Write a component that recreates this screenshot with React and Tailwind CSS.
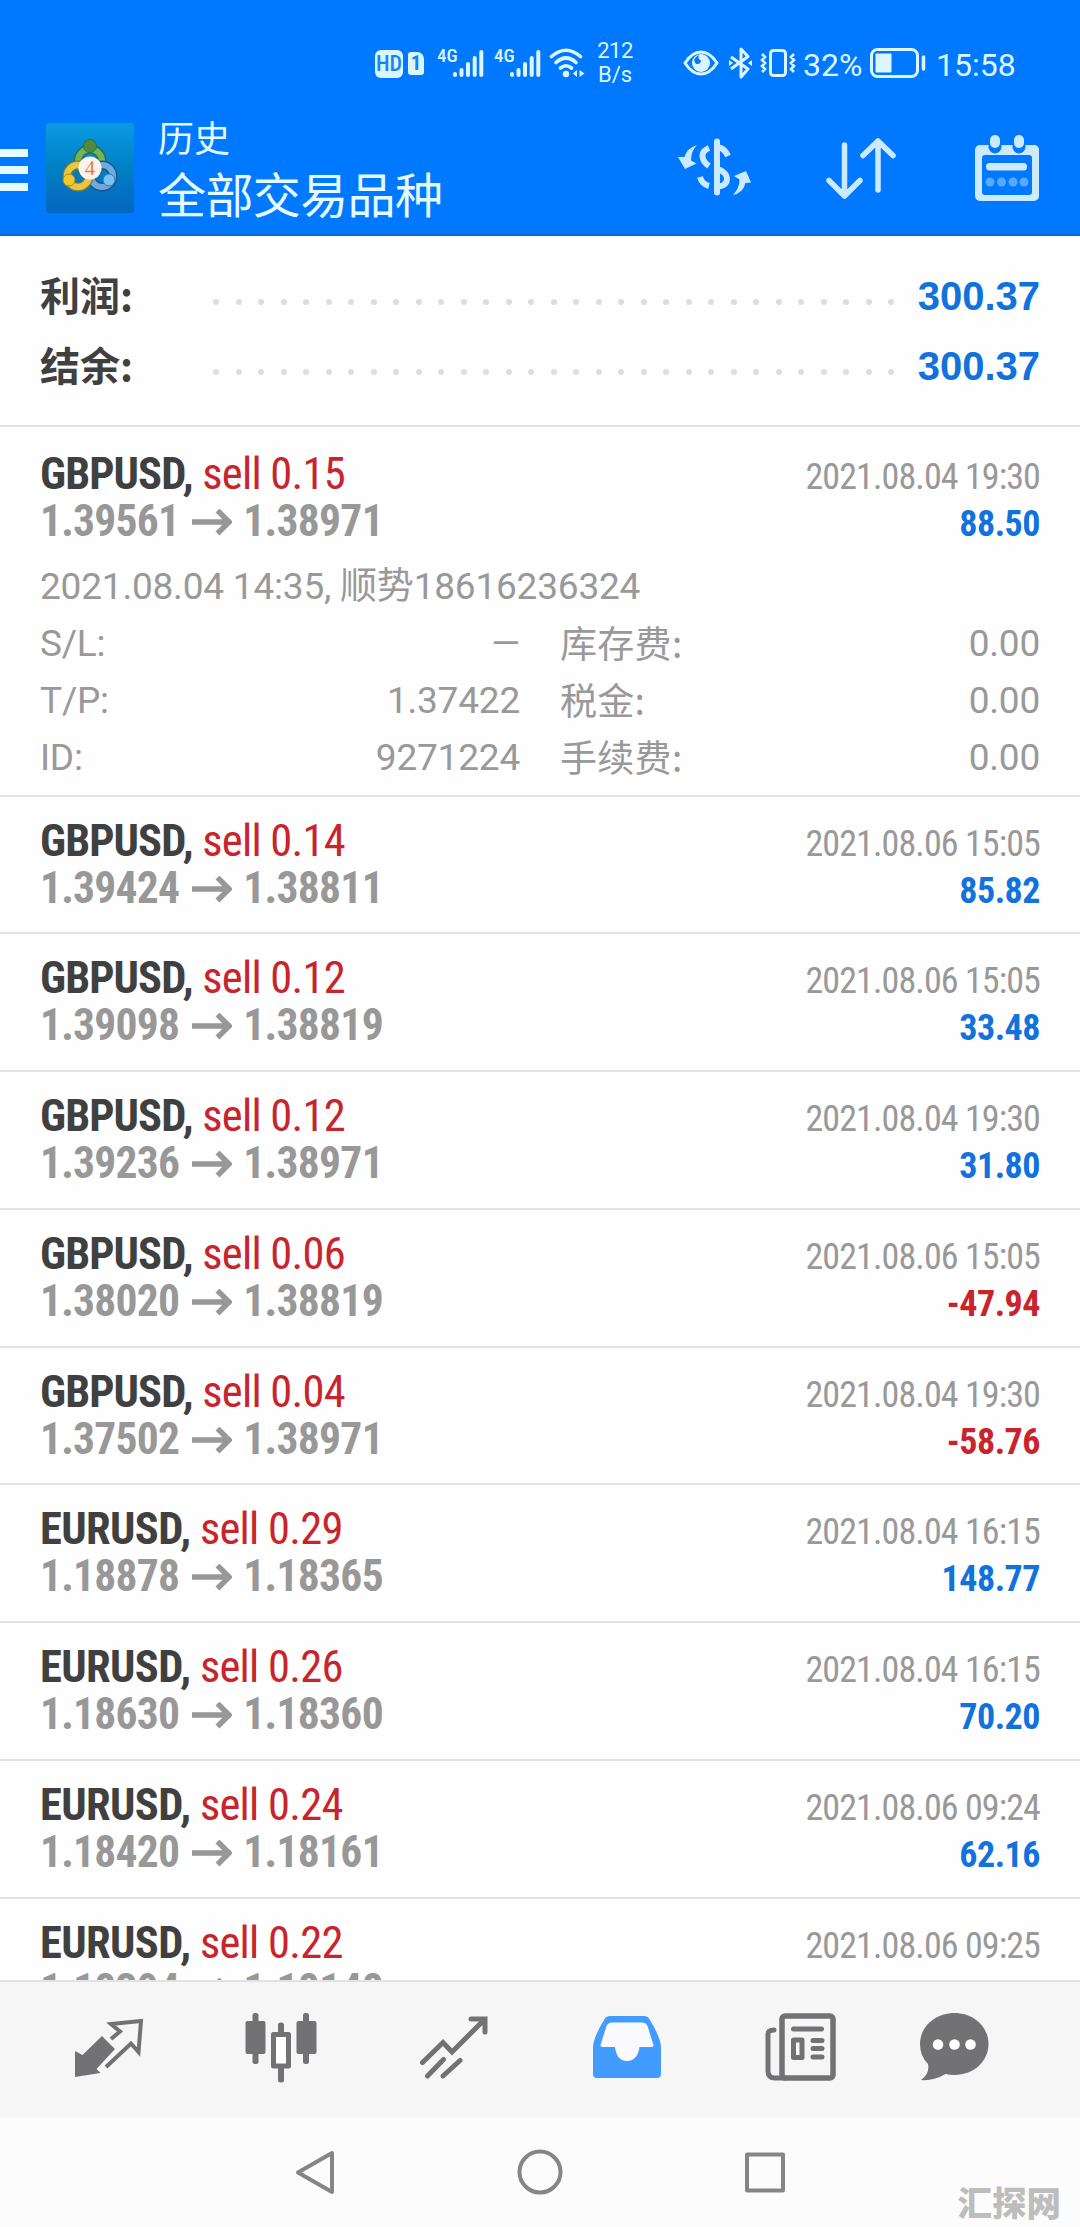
import React from 'react';

const orders = [
  { symbol: 'GBPUSD', lot: '0.14', open: '1.39424', close: '1.38811', time: '2021.08.06 15:05', profit: '85.82' },
  { symbol: 'GBPUSD', lot: '0.12', open: '1.39098', close: '1.38819', time: '2021.08.06 15:05', profit: '33.48' },
  { symbol: 'GBPUSD', lot: '0.12', open: '1.39236', close: '1.38971', time: '2021.08.04 19:30', profit: '31.80' },
  { symbol: 'GBPUSD', lot: '0.06', open: '1.38020', close: '1.38819', time: '2021.08.06 15:05', profit: '-47.94' },
  { symbol: 'GBPUSD', lot: '0.04', open: '1.37502', close: '1.38971', time: '2021.08.04 19:30', profit: '-58.76' },
  { symbol: 'EURUSD', lot: '0.29', open: '1.18878', close: '1.18365', time: '2021.08.04 16:15', profit: '148.77' },
  { symbol: 'EURUSD', lot: '0.26', open: '1.18630', close: '1.18360', time: '2021.08.04 16:15', profit: '70.20' },
  { symbol: 'EURUSD', lot: '0.24', open: '1.18420', close: '1.18161', time: '2021.08.06 09:24', profit: '62.16' },
  { symbol: 'EURUSD', lot: '0.22', open: '1.18394', close: '1.18148', time: '2021.08.06 09:25', profit: '' },
];

const details = [
  ['S/L:', '—', '库存费:', '0.00'],
  ['T/P:', '1.37422', '税金:', '0.00'],
  ['ID:', '9271224', '手续费:', '0.00'],
];

function Signal() {
  return (
    <div className="flex h-[29px]">
      <span className="w-[15px] text-[19px] leading-[13px] font-medium font-stretch-condensed">4G</span>
      <svg width="32" height="29" viewBox="0 0 32 29" stroke="currentColor" strokeWidth="4" strokeLinecap="round">
        <path d="M3 26v-1M9.5 26v-5M16 26V15M22.7 26V9M29.3 26V3" />
      </svg>
    </div>
  );
}

function StatusBar() {
  return (
    <div className="flex h-[106px] items-start pt-[43px] pl-[375px] text-[#dcf6ff]">
      <div className="mt-[7px] flex h-[28px] w-[28px] items-center justify-center rounded-[6px] bg-[#dcf6ff] text-[22px] leading-none font-medium font-stretch-condensed text-[#1684f2]">HD</div>
      <div className="mt-[9px] ml-[5px] flex h-[23px] w-[16px] items-center justify-center rounded-[3px] rounded-tr-[7px] bg-[#dcf6ff] text-[21px] leading-none font-bold font-stretch-condensed text-[#1684f2]">1</div>
      <div className="mt-[6px] ml-[13px]"><Signal /></div>
      <div className="mt-[6px] ml-[10px]"><Signal /></div>
      <svg className="mt-[4px] ml-[8px]" width="36" height="31" viewBox="0 0 36 31" fill="none" stroke="currentColor" strokeWidth="3.6" strokeLinecap="round">
        <path d="M2.5 9.5Q17 -3 31.5 9.5M7 15.5Q17 6.5 27 15.5M11.5 21Q17 16.5 22.5 21" />
        <circle cx="17" cy="27" r="3.2" fill="currentColor" stroke="none" />
        <path d="M28 23v7l-4-3.5zM30.5 23v7l5-3.5z" fill="currentColor" stroke="none" />
      </svg>
      <div className="ml-[10px] w-[40px] text-center text-[22px] leading-[24px] -mt-[4px]">
        <div className="tracking-[-0.5px]">212</div>
        <div>B/s</div>
      </div>
      <svg className="mt-[7px] ml-[48px]" width="36" height="26" viewBox="0 0 36 26" fill="none" stroke="currentColor" strokeWidth="3">
        <path d="M2 13Q9 2 18 2T34 13Q27 24 18 24T2 13z" strokeLinejoin="round" />
        <circle cx="18" cy="13" r="9" fill="currentColor" stroke="none" />
        <path d="M11 10a8.5 8.5 0 0 1 5-5c-1 3-.5 4 2 5.5 0 3-2.5 4.5-5.5 3z" fill="#0078ff" stroke="none" />
      </svg>
      <svg className="mt-[4px] ml-[10px]" width="23" height="32" viewBox="0 0 23 32" fill="none" stroke="currentColor" strokeWidth="3" strokeLinejoin="round">
        <path d="M2 10 19 22l-7 8V2l7 7.5L2 22" />
        <path d="M0 13v6l4-3zM23 13v6l-4-3z" fill="currentColor" stroke="none" />
      </svg>
      <svg className="mt-[5px] ml-[8px]" width="36" height="30" viewBox="0 0 36 30" fill="none" stroke="currentColor" strokeWidth="3">
        <rect x="10.5" y="2.5" width="15" height="25" rx="3" />
        <path d="M2 6l3 3-3 3 3 3-3 3 3 3-3 3M34 6l-3 3 3 3-3 3 3 3-3 3 3 3" strokeWidth="2.6" />
      </svg>
      <span className="ml-[7px] mt-[2px] w-[64px] text-[32px] leading-[40px]">32%</span>
      <svg className="mt-[5px] ml-[3px]" width="56" height="31" viewBox="0 0 56 31" fill="none" stroke="currentColor">
        <rect x="1.5" y="1.5" width="46" height="27" rx="6" strokeWidth="3" />
        <rect x="5.5" y="5.5" width="16" height="19" rx="1" fill="currentColor" stroke="none" />
        <path d="M53.5 9v12" strokeWidth="3.5" strokeLinecap="round" />
      </svg>
      <span className="ml-[10px] mt-[2px] text-[32px] leading-[40px]">15:58</span>
    </div>
  );
}

function Logo() {
  return (
    <svg width="88" height="90" viewBox="0 0 88 90">
      <defs>
        <linearGradient id="bg" x1="0" y1="0" x2="0" y2="1">
          <stop offset="0" stopColor="#0a9ae2" />
          <stop offset="0.5" stopColor="#0080c4" />
          <stop offset="1" stopColor="#0566c0" />
        </linearGradient>
      </defs>
      <rect width="88" height="90" rx="3" fill="url(#bg)" />
      <g fill="none">
        <circle cx="44" cy="38" r="12" stroke="#2f6f4a" strokeWidth="9" />
        <circle cx="44" cy="38" r="12" stroke="#74b35a" strokeWidth="6" />
        <circle cx="56" cy="53" r="11" stroke="#1c558f" strokeWidth="9" />
        <circle cx="56" cy="53" r="11" stroke="#6cabe0" strokeWidth="6" />
        <circle cx="32" cy="53" r="11" stroke="#7a7a38" strokeWidth="9" />
        <circle cx="32" cy="53" r="11" stroke="#e6c644" strokeWidth="6.5" />
      </g>
      <circle cx="44" cy="23" r="6.5" fill="#4f8a3d" stroke="#2f6f3a" />
      <circle cx="23" cy="57" r="6" fill="#f0c92a" stroke="#a88a20" />
      <circle cx="63" cy="57" r="6" fill="#7cc0f0" stroke="#2f75b5" />
      <circle cx="44" cy="45" r="11.5" fill="#fbf4ee" />
      <text x="44" y="52" textAnchor="middle" fontSize="21" fill="#e2803e" fontFamily="Liberation Serif, serif">4</text>
    </svg>
  );
}

function Header() {
  return (
    <header className="h-[236px] shrink-0 border-b-2 border-[#0a68cf] bg-[#0078ff]">
      <StatusBar />
      <div className="flex items-start">
        <div className="mt-[43px] flex w-[28px] flex-col gap-[9px]">
          <div className="h-[8px] bg-[#e6fbff]" />
          <div className="h-[8px] bg-[#e6fbff]" />
          <div className="h-[8px] bg-[#e6fbff]" />
        </div>
        <div className="mt-[17px] ml-[18px]"><Logo /></div>
        <div className="ml-[24px] w-[300px] text-[#e6fbff]">
          <div className="mt-[10px] text-[36px] leading-[48px]">历史</div>
          <div className="text-[48px] leading-[65px] tracking-[-0.6px]">全部交易品种</div>
        </div>
        <svg className="mt-[31px] ml-[218px]" width="76" height="60" viewBox="0 0 76 60" fill="none" stroke="#cbeafd">
          <path d="M41 4.5v51" strokeWidth="6" strokeLinecap="round" />
          <path d="M33 11Q26.5 13.5 26.5 19T33 29M43 10.5Q49 12 52 19M24 40Q26 47 33 49M43 32.5Q51 36 51 42T43 49.5" strokeWidth="6" />
          <path d="M21 8Q11 11 8.5 20L2 20l7 12 11.5-5.5L15 23.5Q15 14 21 8zM57 58Q67 56 69.5 46L75 45.5 70 34 58 39l5.5 3.5Q63.5 51 57 58z" fill="#cbeafd" stroke="none" />
        </svg>
        <svg className="mt-[32px] ml-[74px]" width="70" height="62" viewBox="0 0 70 62" fill="none" stroke="#cbeafd" strokeWidth="5.5" strokeLinecap="round" strokeLinejoin="round">
          <path d="M18.5 7v51M3 42.5 18.5 58 34 42.5M52 52V3M37 17.5 52 3l15 14.5" />
        </svg>
        <svg className="mt-[28px] ml-[79px]" width="65" height="68" viewBox="0 0 65 68">
          <path d="M5 11h8.5v2a6.5 6.5 0 0 0 13 0v-2h11v2a6.5 6.5 0 0 0 13 0v-2H60a5 5 0 0 1 4 4v47a5 5 0 0 1-5 5H5a5 5 0 0 1-5-5V16a5 5 0 0 1 5-5zM10 21a3 3 0 0 0-3 3v34a3 3 0 0 0 3 3h44a3 3 0 0 0 3-3V24a3 3 0 0 0-3-3z" fill="#cbeafd" fillRule="evenodd" />
          <rect x="15" y="1" width="10" height="13" rx="5" fill="#cbeafd" />
          <rect x="39" y="1" width="10" height="13" rx="5" fill="#cbeafd" />
          <rect x="11" y="29" width="41" height="7.5" rx="3.5" fill="#cbeafd" />
          <g fill="#58aaff">
            <circle cx="15" cy="48" r="4.5" />
            <circle cx="26.5" cy="48" r="4.5" />
            <circle cx="38" cy="48" r="4.5" />
            <circle cx="49" cy="48" r="4.5" />
          </g>
        </svg>
      </div>
    </header>
  );
}

function SummaryRow({ label, value }) {
  return (
    <div className="flex h-[70px] items-start">
      <span className="w-[173px] font-[Noto_Sans_CJK_SC,sans-serif] text-[40px] leading-[66px] font-bold text-[#404040]">{label}</span>
      <div className="mt-[38px] flex w-[681px] justify-between">
        {Array.from({ length: 31 }, (_, i) => (
          <span key={i} className="h-[6px] w-[6px] rounded-full bg-[#dedede]" />
        ))}
      </div>
      <span className="ml-auto font-[Liberation_Sans,sans-serif] text-[40px] leading-[70px] font-bold text-[#1272dc]">{value}</span>
    </div>
  );
}

function OrderHead({ order }) {
  const loss = order.profit.startsWith('-');
  return (
    <div className="font-stretch-condensed">
      <div className="flex h-[48px] items-baseline justify-between leading-[48px]">
        <div className="text-[44.5px] tracking-[-0.75px]">
          <span className={order.symbol === 'EURUSD' ? 'font-bold tracking-[-0.6px] text-[#404040]' : 'font-bold tracking-[-0.9px] text-[#404040]'}>
            {order.symbol},
          </span>
          <span className="text-[#c8242c]"> sell {order.lot}</span>
        </div>
        <div className="text-[36px] tracking-[-0.9px] text-[#999]">{order.time}</div>
      </div>
      <div className="flex h-[48px] items-baseline leading-[48px]">
        <span className="text-[43.5px] font-bold tracking-[-0.75px] text-[#989898]">{order.open}</span>
        <svg className="mr-[11px] ml-[13px]" width="40" height="27" viewBox="0 0 40 27" fill="none" stroke="#989898" strokeWidth="5.5">
          <path d="M0 13h37M25.5 1.5 37 13 25.5 24.5" />
        </svg>
        <span className="text-[43.5px] font-bold tracking-[-0.7px] text-[#989898]">{order.close}</span>
        <span className={loss ? 'ml-auto text-[36px] font-bold tracking-[-0.5px] text-[#c8242c]' : 'ml-auto text-[36px] font-bold tracking-[-0.5px] text-[#1272dc]'}>
          {order.profit}
        </span>
      </div>
    </div>
  );
}

function TabBar() {
  return (
    <nav className="flex h-[138px] shrink-0 items-start border-t-2 border-[#e2e2e2] bg-[#f6f6f7] pt-[31px] pl-[75px] text-[#727274]">
      <svg className="mt-[5px]" width="69" height="62" viewBox="0 0 69 62" fill="none" stroke="currentColor" strokeWidth="4">
        <path d="M0 33v26l25.5-4-4-4L40 31 27 18 7.5 37z" fill="currentColor" stroke="none" />
        <path d="M36 21l9-7.5L36 6l30-3-2.5 31L56 25.5 31 49" />
      </svg>
      <svg className="ml-[101px]" width="72" height="70" viewBox="0 0 72 70">
        <g fill="currentColor">
          <rect x="7.5" y="0" width="6" height="51" rx="2.5" />
          <rect x="0.5" y="8" width="20" height="33" rx="2" />
          <rect x="58" y="0" width="6" height="51" rx="2.5" />
          <rect x="51.5" y="8" width="20" height="33" rx="2" />
          <rect x="33" y="9.5" width="6" height="60" rx="2.5" />
        </g>
        <rect x="28.5" y="21.5" width="15" height="31.5" fill="#fff" stroke="currentColor" strokeWidth="5" strokeLinejoin="round" />
      </svg>
      <svg className="mt-[3px] ml-[103px]" width="68" height="63" viewBox="0 0 68 63" fill="none" stroke="currentColor" strokeWidth="5" strokeLinecap="round">
        <path d="M2.5 46.5 23 26.5l9 9.5L64 4M51 3h14v13" />
        <path d="M23.5 43.5 7.5 60M40 44.5 23 60" />
      </svg>
      <svg className="mt-[3px] ml-[105px]" width="68" height="62" viewBox="0 0 68 62">
        <path d="M17 0h34q4 0 6 4Q68 22 68 32v26q0 4-4 4H4q-4 0-4-4V32Q0 22 11 4q2-4 6-4z" fill="#429cff" />
        <path d="M19 6.5h30q4 0 5.5 3.5L60.5 29q.5 2-2 2H46.5c-1 8-5 14-12.5 14s-11-6-12-14H9.5q-2.5 0-2-2L13.5 10Q15 6.5 19 6.5z" fill="#fafafc" />
      </svg>
      <svg className="ml-[104px]" width="71" height="69" viewBox="0 0 71 69" fill="none" stroke="currentColor" strokeWidth="5" strokeLinecap="round">
        <rect x="17" y="3" width="51" height="62" rx="3" strokeWidth="5.5" />
        <path d="M9 17q-6 0-6 4v37q0 7 7 7h10" />
        <path d="M28.5 16h28M48 27.5h9M48 35.5h9M48 44h9" />
        <rect x="28.5" y="27" width="8.5" height="17.5" strokeLinejoin="round" />
      </svg>
      <svg className="ml-[84px]" width="69" height="68" viewBox="0 0 69 68">
        <path d="M34.5 0C54 0 68.5 14 68.5 31S54 62 34.5 62q-5 0-9-1Q14 68 1 67q9-6 7-16Q0 43 0 31C0 14 15 0 34.5 0z" fill="currentColor" />
        <g fill="#fff">
          <circle cx="18" cy="31.5" r="5.3" />
          <circle cx="34.5" cy="31.5" r="5.3" />
          <circle cx="50.5" cy="31.5" r="5.3" />
        </g>
      </svg>
    </nav>
  );
}

function SystemNav() {
  return (
    <div className="relative flex h-[109px] shrink-0 items-start bg-[#fcfcfc] pt-[31px] pl-[295px]">
      <svg width="490" height="46" viewBox="0 0 490 46" fill="none" stroke="#858585" strokeWidth="4" strokeLinejoin="round">
        <path d="M37 4v39L3 23.5z" />
        <circle cx="245" cy="23" r="20.5" />
        <rect x="452" y="5.5" width="36" height="36" />
      </svg>
      <span className="absolute right-[19px] bottom-0 text-[34.5px] leading-[45px] font-black text-[#bdbdbd]">汇探网</span>
    </div>
  );
}

export default function App() {
  const first = { symbol: 'GBPUSD', lot: '0.15', open: '1.39561', close: '1.38971', time: '2021.08.04 19:30', profit: '88.50' };

  return (
    <div className="flex h-[2227px] w-[1080px] flex-col overflow-hidden bg-[#fefefe] font-[Roboto,Noto_Sans_CJK_SC,sans-serif]">
      <Header />
      <section className="h-[191px] shrink-0 border-b-2 border-[#e2e2e2] px-[40px] pt-[25px]">
        <SummaryRow label="利润:" value="300.37" />
        <SummaryRow label="结余:" value="300.37" />
      </section>

      <main className="min-h-0 flex-1 overflow-hidden">
        <div className="h-[369.5px] border-b-2 border-[#e2e2e2] px-[40px] pt-[23px]">
          <OrderHead order={first} />
          <div className="mt-[12px] text-[37px] leading-[57px] tracking-[-0.2px] text-[#999]">
            <div>2021.08.04 14:35, 顺势18616236324</div>
            {details.map(([label, value, label2, value2]) => (
              <div key={label} className="flex h-[57px]">
                <span>{label}</span>
                <span className="ml-auto">{value}</span>
                <span className="ml-[40px] w-[200px] font-[Noto_Sans_CJK_SC,sans-serif] leading-[54px] tracking-[0.3px]">{label2}</span>
                <span className="w-[280px] text-right">{value2}</span>
              </div>
            ))}
          </div>
        </div>
        {orders.map((order, i) => (
          <div key={i} className="h-[137.75px] border-b-2 border-[#e2e2e2] px-[40px] pt-[20px]">
            <OrderHead order={order} />
          </div>
        ))}
      </main>

      <TabBar />
      <SystemNav />
    </div>
  );
}
